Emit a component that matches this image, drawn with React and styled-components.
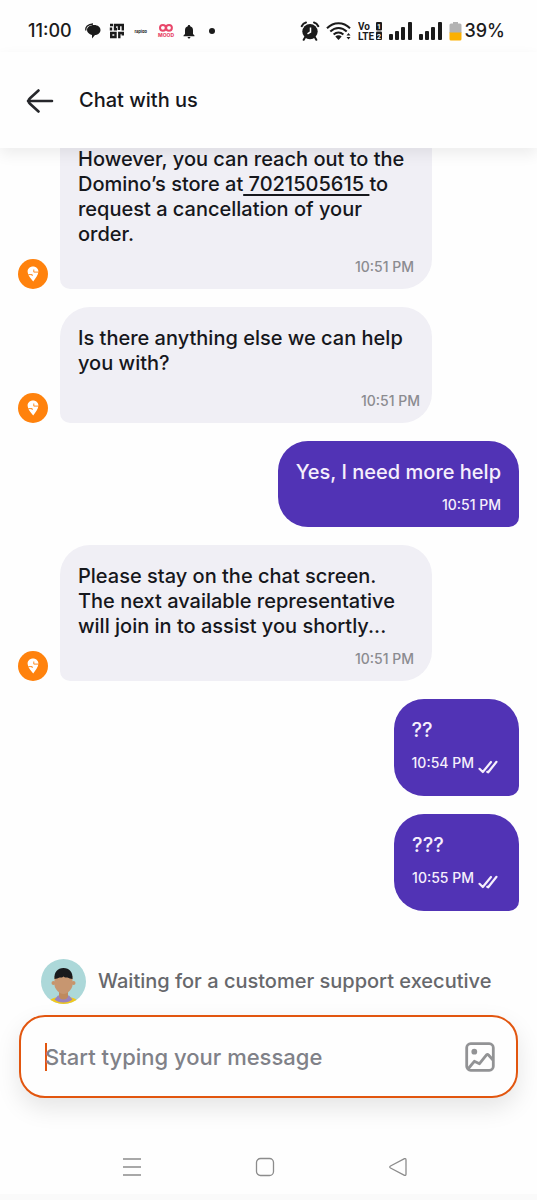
import React, {useState} from "react";
import styled, {createGlobalStyle} from "styled-components";

const MessagesIcon = () => (
    <svg width="16" height="16" viewBox="0 0 16 16" fill="#1b1b1b">
        <path d="M1 7.500C0 4 3 1.200 8 1" fill="none" stroke="#1b1b1b" strokeWidth="1.300"/>
        <path d="M9 2c4 0 6.500 2.200 6.500 5 0 2.900-2.500 4.900-5.500 5.100L7 15.500v-3.600C4 11.200 2 9.500 2 7c0-2.800 2.800-5 7-5Z"/>
    </svg>
)

const MorIcon = () => (
    <svg width="16" height="16" viewBox="0 0 16 16" fill="none" stroke="#1b1b1b" strokeWidth="2.400">
        <path d="M2 4.500V7.500M1 2h3M6 7.500V2h7.800v5.500M6 6.300h2M9.900 2v5"/>
        <path d="M2.200 10h4.300v4H2.200zM10.300 15.200V10h4.700M13.800 10v2.500"/>
    </svg>
)

const MoodIcon = () => (
    <svg width="18" height="16" viewBox="0 0 18 16" fill="none" stroke="#e8476a">
        <circle cx="5.900" cy="4.800" r="2.900" strokeWidth="2"/>
        <circle cx="12" cy="4.800" r="2.900" strokeWidth="2"/>
        <text x="9" y="14" textAnchor="middle" fontSize="5" fontWeight="800" fontFamily="Inter, sans-serif" fill="#e8476a" stroke="none">MOOD</text>
    </svg>
)

const BellIcon = () => (
    <svg width="12" height="15" viewBox="0 0 12 15" fill="#1b1b1b">
        <path d="M6 1c.700 0 1.200.500 1.200 1.200C9.400 2.800 10 4.500 10 6.500V10l1.500 1.500v.8H.5v-.8L2 10V6.500c0-2 .6-3.700 2.800-4.300C4.800 1.500 5.300 1 6 1Z"/>
        <path d="M4.600 13h2.800c0 .9-.6 1.500-1.400 1.500S4.600 13.900 4.600 13Z"/>
    </svg>
)

const AlarmIcon = () => (
    <svg width="20" height="20" viewBox="0 0 20 20">
        <path d="M1.700 5.200C2.500 3.500 4 2 6 1.500M18.300 5.200C17.500 3.500 16 2 14 1.500M5 16.500l-1.300 2.300M15 16.500l1.300 2.300" stroke="#1b1b1b" strokeWidth="2" strokeLinecap="round" fill="none"/>
        <circle cx="10" cy="10.600" r="7.700" fill="#1b1b1b"/>
        <path d="M10.500 6.500v4.500L7.500 12.800" stroke="#fff" strokeWidth="1.500" fill="none"/>
    </svg>
)

const WifiIcon = () => (
    <svg width="26" height="20" viewBox="0 0 26 20" fill="none" stroke="#1b1b1b" strokeWidth="2">
        <path d="M1 7.200C4.500 3.700 8.500 2.200 12.500 2.200S20.500 3.700 24 7.200"/>
        <path d="M4.300 10.500c2.500-2.400 5.200-3.600 8.200-3.600s5.700 1.200 8.200 3.600"/>
        <path d="M7.600 13.600c1.500-1.400 3-2.100 4.900-2.100s3.400.7 4.900 2.100"/>
        <path d="M9.300 15.400c1.700-1.500 4.700-1.500 6.400 0L12.500 19Z" fill="#1b1b1b" stroke="none"/>
        <path d="M20.500 14.500l2-2.500 2 2.500zM20.500 16l2 2.500 2-2.500z" fill="#1b1b1b" stroke="none"/>
    </svg>
)

const VolteIcon = () => (
    <svg width="25" height="20" viewBox="0 0 25 20" fill="#1b1b1b" fontFamily="Roboto, sans-serif" fontWeight="700">
        <text x="0" y="9" fontSize="10">Vo</text>
        <text x="0" y="19" fontSize="10">LTE</text>
        <rect x="18" y="1" width="6" height="8.500" rx="1"/>
        <rect x="18" y="10.500" width="6" height="8.500" rx="1"/>
        <text x="19" y="8" fontSize="7" fill="#fff">1</text>
        <text x="19" y="17.500" fontSize="7" fill="#fff">2</text>
    </svg>
)

const SignalIcon = () => (
    <svg width="24" height="20" viewBox="0 0 24 20" fill="#1b1b1b">
        <rect x="0" y="13" width="4" height="6" rx="1"/>
        <rect x="6" y="10" width="4" height="9" rx="1"/>
        <rect x="12" y="6" width="4" height="13" rx="1"/>
        <rect x="19" y="1" width="4" height="18" rx="1"/>
    </svg>
)

const BatteryIcon = () => (
    <svg width="13" height="20" viewBox="0 0 13 20">
        <path d="M4 1h5v1.500h2A1.500 1.500 0 0 1 12.500 4v8H.5V4A1.500 1.500 0 0 1 2 2.500h2Z" fill="#b3b3b3"/>
        <path d="M.5 11.500h12V18a1.500 1.500 0 0 1-1.500 1.500H2A1.500 1.500 0 0 1 .5 18Z" fill="#fbb002"/>
    </svg>
)

const BackIcon = () => (
    <svg width="28" height="26" viewBox="0 0 28 26" fill="none" stroke="#26272b" strokeWidth="2.600" strokeLinecap="round" strokeLinejoin="round">
        <path d="M26 14H2M12.500 3.500 4 11.200Q1 14 4 16.800L12.500 24.500"/>
    </svg>
)

const SwiggyIcon = () => (
    <svg width="12" height="16" viewBox="0 0 12 16">
        <path d="M6 .5c3 0 5.400 2.200 5.400 5C11.400 9 8.600 12.300 6.200 15.500 4 13 2 10.800 1.200 8.300.9 7.300.6 6.400.6 5.500.6 2.700 3 .5 6 .5Z" fill="#fff"/>
        <path d="M6.800 3.500v2.600h4.700M1.300 8.600h3.900v1.400" fill="none" stroke="#ff820d" strokeWidth=".9"/>
    </svg>
)

const TicksIcon = () => (
    <svg width="20" height="14" viewBox="0 0 20 14" fill="none" stroke="#f6effc" strokeWidth="2.200" strokeLinecap="round" strokeLinejoin="round">
        <path d="M1.500 8.800 4.800 12 13 2M9.300 11.800 10.200 12.300 18.500 1.800"/>
    </svg>
)

const AgentPicture = () => (
    <svg width="45" height="45" viewBox="0 0 45 45" role="img" aria-label="Support executive">
        <clipPath id="agent"><circle cx="22.500" cy="22.500" r="22.500"/></clipPath>
        <g clipPath="url(#agent)">
            <rect width="45" height="45" fill="#acd8d9"/>
            <path d="M7 45c1-4 4-6 8-6.500h15c4 .5 7 2.500 8 6.500Z" fill="#f2c81b"/>
            <path d="M13.500 40.500l3.500-4h11l3.500 4c-4 4-14 4-18 0Z" fill="#9a83bd"/>
            <path d="M18 30h9v7c0 2-2 3.500-4.500 3.500S18 39 18 37Z" fill="#bf8a5e"/>
            <circle cx="12.500" cy="24" r="2" fill="#c8946a"/>
            <circle cx="32.500" cy="24" r="2" fill="#c8946a"/>
            <path d="M13.500 17h18v9c0 4-5 9-9 9s-9-5-9-9Z" fill="#c79670"/>
            <path d="M13.500 20c-.5-7 3-11 9-11S32 13 31.500 20c-2-.2-3.500-.8-5-1.500h-2.500l-1.500-1-1.500 1h-2.500c-1.500.7-3 1.300-5 1.500Z" fill="#191a1c"/>
        </g>
    </svg>
)

const PhotoIcon = () => (
    <svg width="30" height="30" viewBox="0 0 30 30" fill="none" stroke="#929395" strokeWidth="2.800" strokeLinejoin="round">
        <rect x="1.700" y="1.700" width="26.600" height="26.600" rx="4"/>
        <circle cx="9.300" cy="9.700" r="2.900" fill="#929395" stroke="none"/>
        <path d="M3 27 9.300 19.300 14.500 21.700 21.500 12.800Q22.500 12 23.500 13L28 18"/>
    </svg>
)

const Message = ({message}) => {
    const mine = message.from === 'me'
    return (
        <Row $mine={mine}>
            {!mine && <BotAvatar><SwiggyIcon/></BotAvatar>}
            <Bubble $mine={mine} $continued={message.continued}>
                <Text>{message.text}</Text>
                <Meta $mine={mine} $prompt={message.prompt} $read={message.read}>
                    <time>{message.time}</time>
                    {message.read && <Ticks><TicksIcon/></Ticks>}
                </Meta>
            </Bubble>
        </Row>
    )
}

const App = () => {
    const [value, setValue] = useState('');

    return (
        <Screen>
            <GlobalStyle/>
            <StatusBar>
                <StatusGroup $gap={13}>
                    <Clock>11:00</Clock>
                    <Notifications>
                        <MessagesIcon/>
                        <MorIcon/>
                        <Rapido>rapido</Rapido>
                        <MoodIcon/>
                        <BellIcon/>
                        <Dot/>
                    </Notifications>
                </StatusGroup>
                <StatusGroup $gap={6}>
                    <AlarmIcon/>
                    <WifiIcon/>
                    <VolteIcon/>
                    <SignalIcon/>
                    <SignalIcon/>
                    <Battery><BatteryIcon/>39%</Battery>
                </StatusGroup>
            </StatusBar>
            <Header>
                <IconButton aria-label="Back"><BackIcon/></IconButton>
                <Title>Chat with us</Title>
            </Header>
            <Chat>
                {messages.map((message) => <Message key={message.id} message={message}/>)}
            </Chat>
            <Waiting>
                <AgentPicture/>
                Waiting for a customer support executive
            </Waiting>
            <Composer>
                <Field>
                    {!value && <Caret/>}
                    <Input
                        aria-label="Message"
                        placeholder="Start typing your message"
                        value={value}
                        onChange={(e) => setValue(e.target.value)}
                    />
                </Field>
                <IconButton type="button" aria-label="Add a photo"><PhotoIcon/></IconButton>
            </Composer>
            <NavBar>
                <IconButton aria-label="Recent apps">
                    <svg width="20" height="20" viewBox="0 0 20 20" stroke="#8c8c8c" strokeWidth="1.500"><path d="M1 2h18M1 10h18M1 18h18"/></svg>
                </IconButton>
                <IconButton aria-label="Home">
                    <svg width="20" height="20" viewBox="0 0 20 20" fill="none" stroke="#8c8c8c" strokeWidth="1.300"><rect x="1.500" y="1.500" width="17" height="17" rx="4"/></svg>
                </IconButton>
                <IconButton aria-label="Back to previous app">
                    <svg width="20" height="20" viewBox="0 0 20 20" fill="none" stroke="#8c8c8c" strokeWidth="1.300" strokeLinejoin="round"><path d="M2.500 9 16.500 1.700Q18 1.200 18 3V17Q18 18.800 16.500 18.300L2.500 11Q1 10 2.500 9Z"/></svg>
                </IconButton>
            </NavBar>
        </Screen>
    )
}

const GlobalStyle = createGlobalStyle`
  * {
    box-sizing: border-box;
  }
  body {
    margin: 0;
    background: #fefefe;
    color: #16171c;
    font-family: Inter, "Liberation Sans", sans-serif;
    font-weight: 500;
  }
  svg {
    display: block;
    flex-shrink: 0;
  }
`
const Screen = styled.div`
  display: flex;
  flex-direction: column;
  height: 100vh;
`
const StatusBar = styled.div`
  display: flex;
  justify-content: space-between;
  align-items: center;
  height: 52px;
  padding: 10px 32px 0 28px;
  flex-shrink: 0;
`
const StatusGroup = styled.div`
  display: flex;
  align-items: center;
  gap: ${({$gap}) => $gap}px;
`
const Clock = styled.time`
  font-size: 18px;
  line-height: 20px;
  color: #1b1b1b;
`
const Notifications = styled.div`
  display: flex;
  align-items: center;
  gap: 8px;
`
const Rapido = styled.span`
  width: 16px;
  font-size: 4px;
  font-weight: 700;
  text-align: center;
`
const Dot = styled.span`
  width: 6px;
  height: 6px;
  margin-left: 6px;
  border-radius: 50%;
  background: #1b1b1b;
`
const Battery = styled.span`
  display: flex;
  align-items: center;
  gap: 3px;
  font-size: 18px;
  line-height: 20px;
  color: #1b1b1b;
`
const Header = styled.header`
  display: flex;
  align-items: center;
  gap: 25px;
  height: 96px;
  padding: 0 26px;
  flex-shrink: 0;
  background: #fefefe;
  box-shadow: 0 6px 14px rgba(0, 0, 0, 0.07);
  z-index: 1;
`
const Title = styled.h1`
  margin: 0;
  font-size: 20px;
  line-height: 25px;
  font-weight: 500;
`
const IconButton = styled.button`
  padding: 0;
  border: none;
  background: none;
  cursor: pointer;
`
const Chat = styled.main`
  display: flex;
  flex: 1;
  flex-direction: column;
  justify-content: flex-end;
  gap: 18px;
  min-height: 0;
  padding: 0 18px 48px;
  overflow: hidden;
`
const Row = styled.div`
  display: flex;
  align-items: flex-end;
  justify-content: ${({$mine}) => $mine ? 'flex-end' : 'flex-start'};
  gap: 12px;
  flex-shrink: 0;
`
const BotAvatar = styled.div`
  display: flex;
  align-items: center;
  justify-content: center;
  width: 30px;
  height: 30px;
  flex-shrink: 0;
  border-radius: 50%;
  background: #ff820d;
`
const Bubble = styled.div`
  padding: 19px 18px 12px;
  max-width: ${({$mine}) => $mine ? '80%' : '75%'};
  width: ${({$mine}) => $mine ? 'auto' : '372px'};
  border-radius: ${({$mine, $continued}) => $mine ? '30px 30px 10px 30px' : $continued ? '0 0 30px 10px' : '30px 30px 30px 10px'};
  background: ${({$mine}) => $mine ? '#5133b5' : '#f0eff5'};
  color: ${({$mine}) => $mine ? '#f6effc' : '#16171c'};
`
const Text = styled.p`
  margin: 0;
  font-size: 20px;
  line-height: 25px;
`
const Phone = styled.a`
  color: inherit;
  text-decoration: underline;
  text-decoration-thickness: 2px;
  text-underline-offset: 3px;
  white-space: pre-wrap;
`
const Meta = styled.div`
  display: flex;
  justify-content: flex-end;
  gap: 4px;
  margin-top: ${({$prompt}) => $prompt ? 15 : 10}px;
  margin-right: ${({$prompt}) => $prompt ? -6 : 0}px;
  padding: ${({$read}) => $read ? '0 3px 11px 0' : 0};
  font-size: 14px;
  line-height: 20px;
  color: ${({$mine}) => $mine ? '#f6effc' : '#8b8b90'};
`
const Ticks = styled.span`
  padding-top: 7px;
  height: 20px;
`
const Waiting = styled.p`
  display: flex;
  align-items: center;
  gap: 12px;
  margin: 0 18px 11px 41px;
  font-size: 20px;
  line-height: 25px;
  color: #67686c;
`
const Composer = styled.form`
  display: flex;
  align-items: center;
  gap: 12px;
  height: 83px;
  margin: 0 19px;
  padding: 0 21px 0 24px;
  flex-shrink: 0;
  border: 2px solid #e2560f;
  border-radius: 26px;
  background: #fefefe;
  box-shadow: 0 10px 24px rgba(0, 0, 0, 0.1);
`
const Field = styled.div`
  display: flex;
  align-items: center;
  flex: 1;
`
const Caret = styled.span`
  width: 2px;
  height: 28px;
  margin-right: -2px;
  background: #e2560f;
`
const Input = styled.input`
  flex: 1;
  min-width: 0;
  padding: 0;
  border: none;
  outline: none;
  background: none;
  font: inherit;
  font-size: 22px;
  line-height: 28px;
  color: #16171c;
  caret-color: #e2560f;

  &::placeholder {
    color: #808188;
    opacity: 1;
  }
`
const NavBar = styled.nav`
  display: flex;
  align-items: center;
  justify-content: center;
  gap: 113px;
  height: 102px;
  padding: 42px 7px 0 0;
  flex-shrink: 0;
  border-bottom: 6px solid #fafafa;
`

const messages = [
    {id: 1, from: 'bot', continued: true, time: '10:51 PM', text: (
        <>However, you can reach out to the Domino’s store at<Phone href="tel:7021505615"> 7021505615 </Phone>to request a cancellation of your order.</>
    )},
    {id: 2, from: 'bot', prompt: true, time: '10:51 PM', text: 'Is there anything else we can help you with?'},
    {id: 3, from: 'me', time: '10:51 PM', text: 'Yes, I need more help'},
    {id: 4, from: 'bot', time: '10:51 PM', text: 'Please stay on the chat screen. The next available representative will join in to assist you shortly...'},
    {id: 5, from: 'me', read: true, time: '10:54 PM', text: '??'},
    {id: 6, from: 'me', read: true, time: '10:55 PM', text: '???'},
]

export default App
